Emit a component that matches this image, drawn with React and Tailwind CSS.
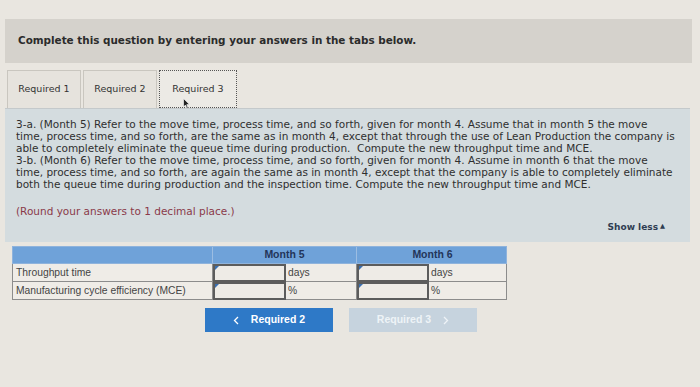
import React from 'react';

const lines = [
  '3-a. (Month 5) Refer to the move time, process time, and so forth, given for month 4. Assume that in month 5 the move',
  'time, process time, and so forth, are the same as in month 4, except that through the use of Lean Production the company is',
  'able to completely eliminate the queue time during production.  Compute the new throughput time and MCE.',
  '3-b. (Month 6) Refer to the move time, process time, and so forth, given for month 4. Assume in month 6 that the move',
  'time, process time, and so forth, are again the same as in month 4, except that the company is able to completely eliminate',
  'both the queue time during production and the inspection time. Compute the new throughput time and MCE.',
];

function InputCell() {
  return (
    <div className="relative h-[18px] border-2 border-[#5c5c5c] bg-[#eeebe6]">
      {/* little marker in the corner */}
      <div className="absolute left-0 top-0 w-0 h-0 border-t-[4px] border-r-[4px] border-t-[#3a6fb0] border-r-transparent" />
    </div>
  );
}

function Chevron({ dir, color }) {
  return (
    <svg width="6" height="9" viewBox="0 0 6 9">
      <path
        d={dir === 'left' ? 'M5 1 L1.5 4.5 L5 8' : 'M1 1 L4.5 4.5 L1 8'}
        fill="none"
        stroke={color}
        strokeWidth="1.3"
      />
    </svg>
  );
}

export default function App() {
  const sans = { fontFamily: '"DejaVu Sans", Verdana, sans-serif' };
  const arial = { fontFamily: '"Liberation Sans", Arial, sans-serif' };

  return (
    <div className="w-[700px] h-[387px] bg-[#e9e6e0] overflow-hidden pt-[19px]" style={sans}>
      <div className="ml-[5px] w-[687px] h-[44px] bg-[#d5d2cc] flex items-center pl-[13px]">
        <span className="text-[10.4px] font-bold text-[#2b2b2b]">
          Complete this question by entering your answers in the tabs below.
        </span>
      </div>

      <div className="ml-[7px] mt-[7px] flex gap-[2px] h-[38px]">
        <div className="w-[74px] border border-b-0 border-[#c9c6bf] bg-[#e6e3dd] flex items-center justify-center text-[9.5px] text-[#333]">
          Required 1
        </div>
        <div className="w-[74px] border border-b-0 border-[#c9c6bf] bg-[#e6e3dd] flex items-center justify-center text-[9.5px] text-[#333]">
          Required 2
        </div>
        <div className="relative w-[78px] border border-dotted border-[#555] bg-[#eceae5] flex items-center justify-center text-[9.5px] text-[#333]">
          Required 3
          <svg className="absolute left-[23px] top-[27px]" width="7" height="11" viewBox="0 0 7 11">
            <path d="M0.5 0.5 L0.5 9 L2.5 7 L4 10.5 L5.2 10 L3.8 6.6 L6.5 6.6 Z" fill="#222" stroke="#fff" strokeWidth="0.6" />
          </svg>
        </div>
      </div>

      <div className="ml-[5px] w-[685px] h-[134px] bg-[#d4dcdf] border-t border-[#c4c9cb] pl-[11px] pt-[9px] relative">
        <div className="text-[10.5px] leading-[12px] text-[#2f2f2f] whitespace-pre">
          {lines.map((l) => (
            <div key={l}>{l}</div>
          ))}
        </div>
        <div className="mt-[15px] text-[10.5px] leading-[12px] text-[#8a3a4a]">
          (Round your answers to 1 decimal place.)
        </div>
        <div className="absolute right-[25px] bottom-[8px] text-[9px] font-bold text-[#2f3d52] flex items-center gap-[2px]">
          Show less
          <span className="text-[6.5px]">▲</span>
        </div>
      </div>

      <div className="ml-[12px] mt-[4px] w-[495px]" style={arial}>
        <div className="grid grid-cols-[200px_144px_151px] h-[18px] bg-[#6fa2d9] border border-[#8fb3dc]">
          <div className="border-r border-[#9cbde2]" />
          <div className="border-r border-[#9cbde2] flex items-center justify-center text-[10.5px] font-bold text-[#23355a]">
            Month 5
          </div>
          <div className="flex items-center justify-center text-[10.5px] font-bold text-[#23355a]">
            Month 6
          </div>
        </div>
        {[
          ['Throughput time', 'days'],
          ['Manufacturing cycle efficiency (MCE)', '%'],
        ].map(([label, unit]) => (
          <div
            key={label}
            className="grid grid-cols-[200px_73px_71px_72px_79px] h-[18px] bg-[#efece7] border-x border-b border-[#8c8c8c] text-[10.3px] text-[#444]"
          >
            <div className="border-r border-[#8c8c8c] flex items-center pl-[3px]">{label}</div>
            <InputCell />
            <div className="border-r border-[#8c8c8c] flex items-center pl-[2px]">{unit}</div>
            <InputCell />
            <div className="flex items-center pl-[2px]">{unit}</div>
          </div>
        ))}
      </div>

      <div className="mt-[8px] ml-[205px] flex gap-[16px]" style={arial}>
        <div className="w-[128px] h-[24px] bg-[#2e79c7] flex items-center justify-center gap-[12px] text-white text-[10.5px] font-bold">
          <Chevron dir="left" color="#ffffff" />
          Required 2
        </div>
        <div className="w-[128px] h-[24px] bg-[#c6d3de] flex items-center justify-center gap-[12px] text-[#eef3f7] text-[10.5px] font-bold">
          Required 3
          <Chevron dir="right" color="#eef3f7" />
        </div>
      </div>
    </div>
  );
}
